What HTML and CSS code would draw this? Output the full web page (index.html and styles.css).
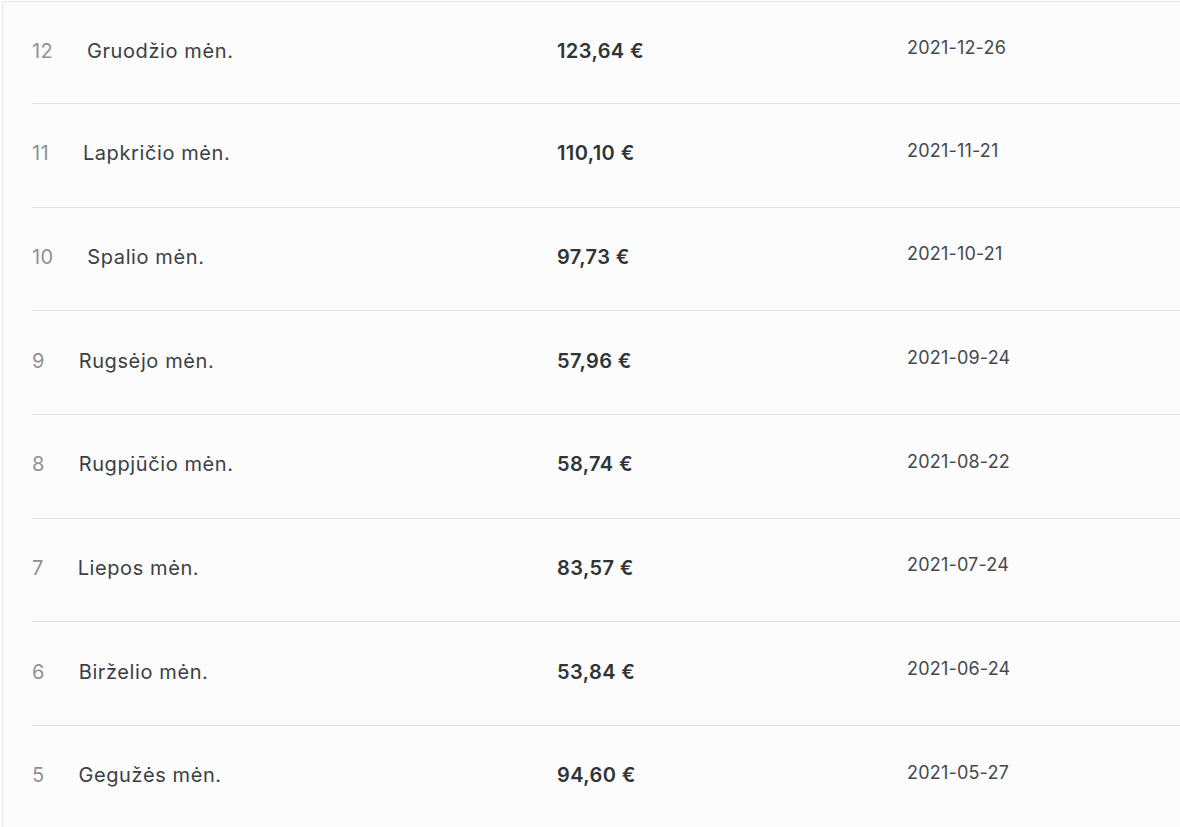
FILE: index.html
```html
<!DOCTYPE html>
<html lang="lt">
<head>
<meta charset="utf-8">
<title>Mokėjimai</title>
<link rel="stylesheet" href="styles.css">
</head>
<body>
<div class="card">
  <div class="row">
    <div class="month"><span class="num">12</span><span class="name">Gruodžio mėn.</span></div>
    <div class="amount">123,64 €</div>
    <div class="date">2021-12-26</div>
  </div>
  <div class="row">
    <div class="month"><span class="num">11</span><span class="name">Lapkričio mėn.</span></div>
    <div class="amount">110,10 €</div>
    <div class="date">2021-11-21</div>
  </div>
  <div class="row">
    <div class="month"><span class="num">10</span><span class="name">Spalio mėn.</span></div>
    <div class="amount">97,73 €</div>
    <div class="date">2021-10-21</div>
  </div>
  <div class="row">
    <div class="month"><span class="num">9</span><span class="name">Rugsėjo mėn.</span></div>
    <div class="amount">57,96 €</div>
    <div class="date">2021-09-24</div>
  </div>
  <div class="row">
    <div class="month"><span class="num">8</span><span class="name">Rugpjūčio mėn.</span></div>
    <div class="amount">58,74 €</div>
    <div class="date">2021-08-22</div>
  </div>
  <div class="row">
    <div class="month"><span class="num">7</span><span class="name">Liepos mėn.</span></div>
    <div class="amount">83,57 €</div>
    <div class="date">2021-07-24</div>
  </div>
  <div class="row">
    <div class="month"><span class="num">6</span><span class="name">Birželio mėn.</span></div>
    <div class="amount">53,84 €</div>
    <div class="date">2021-06-24</div>
  </div>
  <div class="row">
    <div class="month"><span class="num">5</span><span class="name">Gegužės mėn.</span></div>
    <div class="amount">94,60 €</div>
    <div class="date">2021-05-27</div>
  </div>
  <div class="row">
    <div class="month"><span class="num">4</span><span class="name">Balandžio mėn.</span></div>
    <div class="amount">88,12 €</div>
    <div class="date">2021-04-24</div>
  </div>
</div>
</body>
</html>
```
FILE: styles.css
```css
html, body {
  margin: 0;
  padding: 0;
  background: #ffffff;
  overflow: hidden;
}

body {
  font-family: Inter, "Liberation Sans", sans-serif;
  color: #3b4045;
}

.card {
  margin: 1px 0 0 2px;
  background: #fcfcfc;
  border-top: 1px solid #e4e4e4;
  border-left: 1px solid #e4e4e4;
  border-top-left-radius: 3px;
}

.row {
  display: grid;
  grid-template-columns: 525px 350px 1fr;
  align-items: center;
  box-sizing: border-box;
  height: 103.67px;
  padding-bottom: 4px;
  margin-left: 29px;
  border-bottom: 1px solid #e2e2e2;
}

.row:first-child {
  height: 102px;
}

.month {
  display: flex;
  align-items: baseline;
  gap: 34px;
  font-size: 20px;
}

.num {
  color: #8c9298;
  letter-spacing: 0.3px;
}

.name {
  color: #3b4045;
  letter-spacing: 0.6px;
}

.amount {
  font-size: 20px;
  font-weight: 600;
  letter-spacing: 0.4px;
  color: #2f3438;
}

.date {
  font-size: 18px;
  letter-spacing: 0.2px;
  color: #44494e;
  margin-top: -6px;
}
```
